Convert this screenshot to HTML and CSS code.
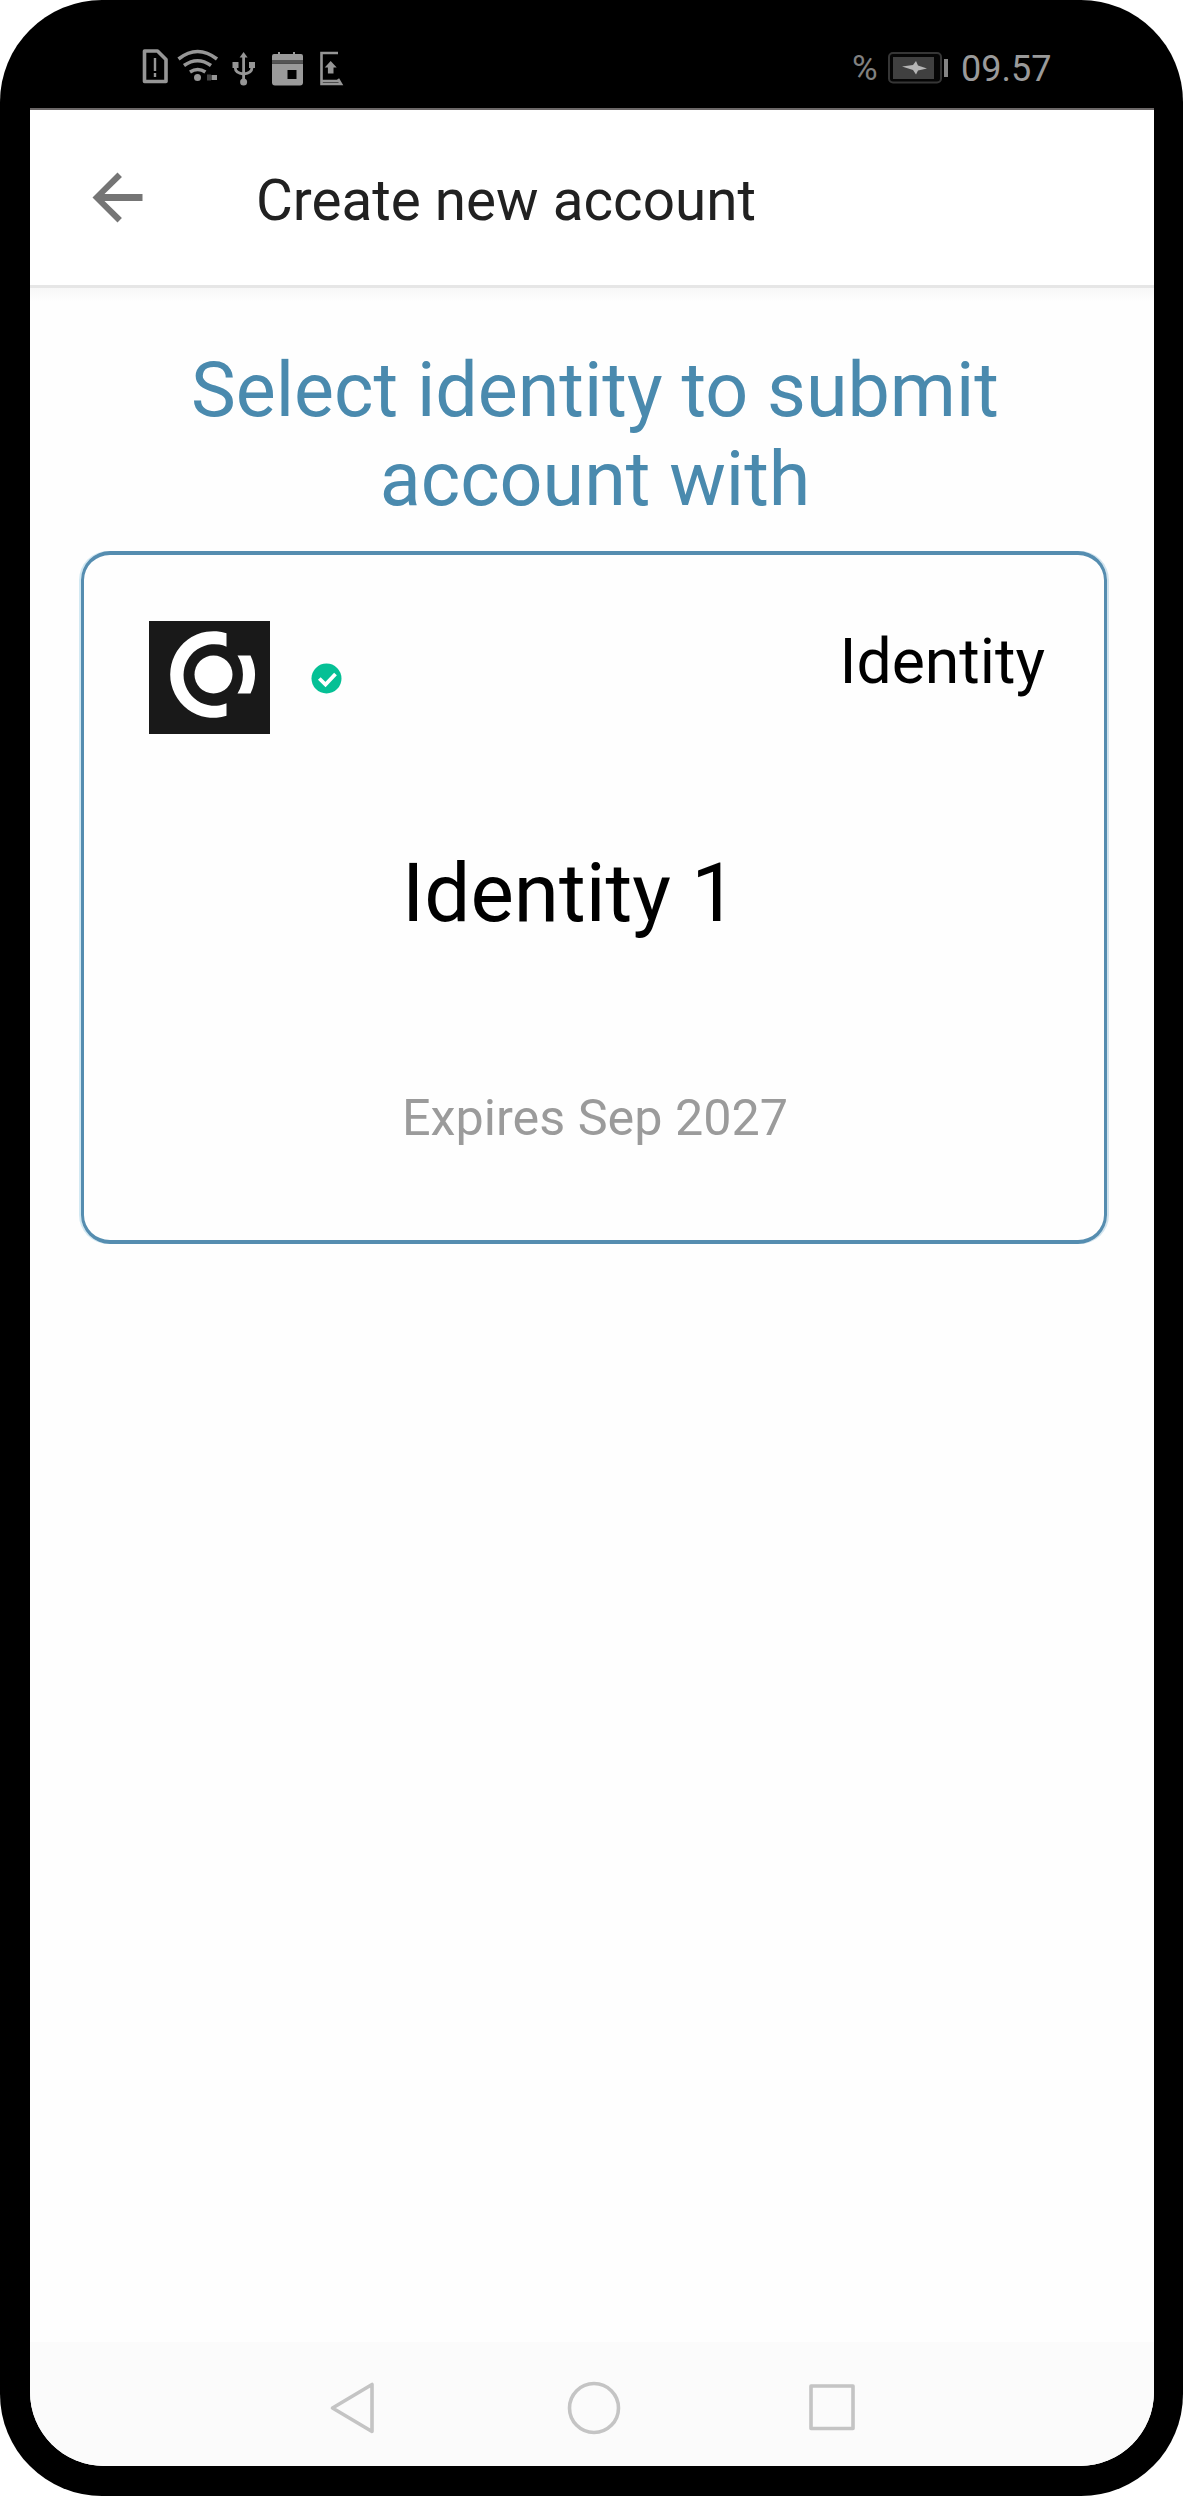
FILE: index.html
```html
<!DOCTYPE html>
<html lang="en">
<head>
<meta charset="utf-8">
<title>Create new account</title>
<link rel="stylesheet" href="styles.css">
</head>
<body>
<div class="phone">
  <div class="status">
    <svg class="status-icons" width="220" height="55" viewBox="0 0 220 55" fill="none" stroke="#969696" stroke-width="3.600">
      <path d="M14.500 11h13l8.500 8.500v22h-21.500z" stroke-linejoin="round"/>
      <path d="M25 18v13M25 33v4" stroke-width="2.400"/>
      <path d="M48.500 19q19-15 38.500 0M54 25.500q13.500-9.500 27 0M60 32q7.700-5 15.400 0"/>
      <circle cx="67.500" cy="37.500" r="3.500" fill="#969696" stroke="none"/>
      <path d="M77 37.500h4" stroke="#444" stroke-width="6"/>
      <path d="M81.500 37.500h5.500" stroke-width="5"/>
      <path d="M113.600 14v29M105.300 25v3q0 5 8.300 6q8.300-1 8.300-6v-3" stroke-width="2.800"/>
      <path d="M102.500 25h6M119 25h6" stroke-width="6"/>
      <path d="M113.600 12l4 5.500h-8z" fill="#969696" stroke="none"/>
      <circle cx="113.600" cy="42" r="3.500" fill="#969696" stroke="none"/>
      <path d="M144 14h4v-2h2v2h13v-2h2v2h6q2 0 2 2v4h-31v-4q0-2 2-2zM142 23.500h31v19q0 3-3 3h-25q-3 0-3-3z" fill="#9a9a9a" stroke="none"/>
      <path d="M142 21.500h31" stroke="#555" stroke-width="3"/>
      <path d="M157.500 30h9v9h-9z" fill="#000" stroke="none"/>
      <path d="M208 13h-16.500v31h19.500l-3-5M191.500 41h17" stroke-width="2.600"/>
      <path d="M200.700 21l6 6.500h-3.200v6h-5.600v-6h-3.200z" fill="#969696" stroke="none"/>
    </svg>
    <div class="status-right">
      <span class="percent">%</span>
      <svg class="battery" width="62" height="32" viewBox="0 0 62 32">
        <rect x="1" y="1" width="52" height="29.500" rx="4" fill="#050505" stroke="#363636" stroke-width="2"/>
        <rect x="5" y="5" width="41" height="22" fill="#404040"/>
        <path d="M14 14.500l11-1.500 3-4 2 4.500 9 3-9 2-2 4-3-4.500z" fill="#b5b5b5"/>
        <rect x="56" y="7" width="4" height="18" fill="#858585"/>
      </svg>
      <span class="clock">09.57</span>
    </div>
  </div>
  <div class="screen">
    <header class="appbar">
      <svg class="back" width="75" height="75" viewBox="0 0 24 24" fill="#757575"><path d="M20 10.900H7.830l5.590-5.490L12 4l-8 8 8 8 1.410-1.410L7.830 13.100H20z"/></svg>
      <span class="title">Create new account</span>
    </header>
    <main class="content">
      <h1 class="heading">Select identity to submit<br>account with</h1>
      <section class="card">
        <div class="card-top">
          <svg class="logo" width="121" height="113" viewBox="0 0 121 113">
            <rect width="121" height="113" fill="#191919"/>
            <circle cx="64.500" cy="53.500" r="19" fill="#fff"/>
            <path d="M77.500 16.500V12.200A43.300 43.300 0 1 0 77.500 94.800V82.300A30.800 30.800 0 1 1 77.500 25.700z" fill="#fff"/>
            <path d="M88.500 34.500H101.500A44 44 0 0 1 101.500 72.500H88.500A36 36 0 0 0 88.500 34.500z" fill="#fff"/>
          </svg>
          <svg class="check" width="31" height="31" viewBox="0 0 31 31">
            <circle cx="15.500" cy="15.500" r="15" fill="#05c095"/>
            <path d="M8.300 15.500l6.200 6L24.500 11" fill="none" stroke="#fff" stroke-width="3.800"/>
          </svg>
          <span class="card-kind">Identity</span>
        </div>
        <div class="card-name">Identity 1</div>
        <div class="card-expiry">Expires Sep 2027</div>
      </section>
    </main>
    <nav class="navbar">
      <svg width="46" height="54" viewBox="0 0 46 54"><path d="M43 3.500v47L3.500 27z"/></svg>
      <svg width="54" height="54" viewBox="0 0 54 54"><circle cx="27" cy="27" r="24.500"/></svg>
      <svg width="48" height="54" viewBox="0 0 48 54"><path d="M3 5h42v42.500H3z"/></svg>
    </nav>
  </div>
</div>
</body>
</html>
```
FILE: styles.css
```css
* { box-sizing: border-box; }
body {
  margin: 0;
  background: #fff;
  font-family: Roboto, "Liberation Sans", sans-serif;
}
svg { display: block; flex: none; }
.phone {
  display: flex;
  flex-direction: column;
  width: 1183px;
  height: 2496px;
  padding: 0 29px 30px 30px;
  background: #000;
  border-radius: 102px;
}
.status {
  display: flex;
  justify-content: space-between;
  height: 108px;
  padding: 40px 103px 0 100px;
  color: #9a9a9a;
}
.status-right {
  display: flex;
  align-items: flex-start;
  font-size: 36px;
  line-height: 42px;
  padding-top: 8px;
}
.percent { color: #808080; width: 36px; font-size: 35px; }
.battery { margin: 4px 11px 0 0; }
.clock { width: 90px; white-space: nowrap; }
.screen {
  display: flex;
  flex-direction: column;
  flex: 1;
  overflow: hidden;
  border-top: 2px solid #6b6767;
  background: #fefefe;
  border-radius: 0 0 74px 74px;
}
.appbar {
  display: flex;
  align-items: center;
  height: 178px;
  padding-left: 50px;
  background: #fff;
  border-bottom: 3px solid #e6e6e6;
}
.title {
  margin-left: 101px;
  padding-top: 6px;
  font-size: 56.6px;
  line-height: 66px;
  color: #212121;
}
.content {
  flex: 1;
  padding: 58px 47px 0 51px;
  background: linear-gradient(#f7f7f7, #fefefe 14px);
}
.heading {
  margin: 0 0 28px;
  padding-left: 2px;
  font-size: 75.4px;
  font-weight: 400;
  line-height: 88.5px;
  text-align: center;
  color: #4a8aae;
}
.card {
  height: 693px;
  padding: 66px 59px 0 65px;
  border: solid #558db0;
  border-width: 4px 3px;
  border-radius: 29px;
  box-shadow: -2px 0 #d2e9f3, 2px 0 #d2e4ee;
}
.card-top { display: flex; align-items: flex-start; }
.check { margin: 42px 0 0 41px; }
.card-kind { margin: 4px 0 0 auto; font-size: 62.5px; line-height: 74px; }
.card-name { margin: 111px 0 0 253px; font-size: 81.8px; line-height: 96px; }
.card-expiry { margin: 147px 0 0 253px; font-size: 50.3px; line-height: 60px; color: #9b9b9b; }
.navbar {
  display: flex;
  height: 124px;
  padding: 39px 0 0 299px;
  background: #fbfbfb;
  fill: none;
  stroke: #c4c4c4;
  stroke-width: 3.600;
  stroke-linejoin: round;
}
.navbar svg + svg { margin-left: 192px; }
.navbar svg:last-child { margin-left: 187px; }
```
